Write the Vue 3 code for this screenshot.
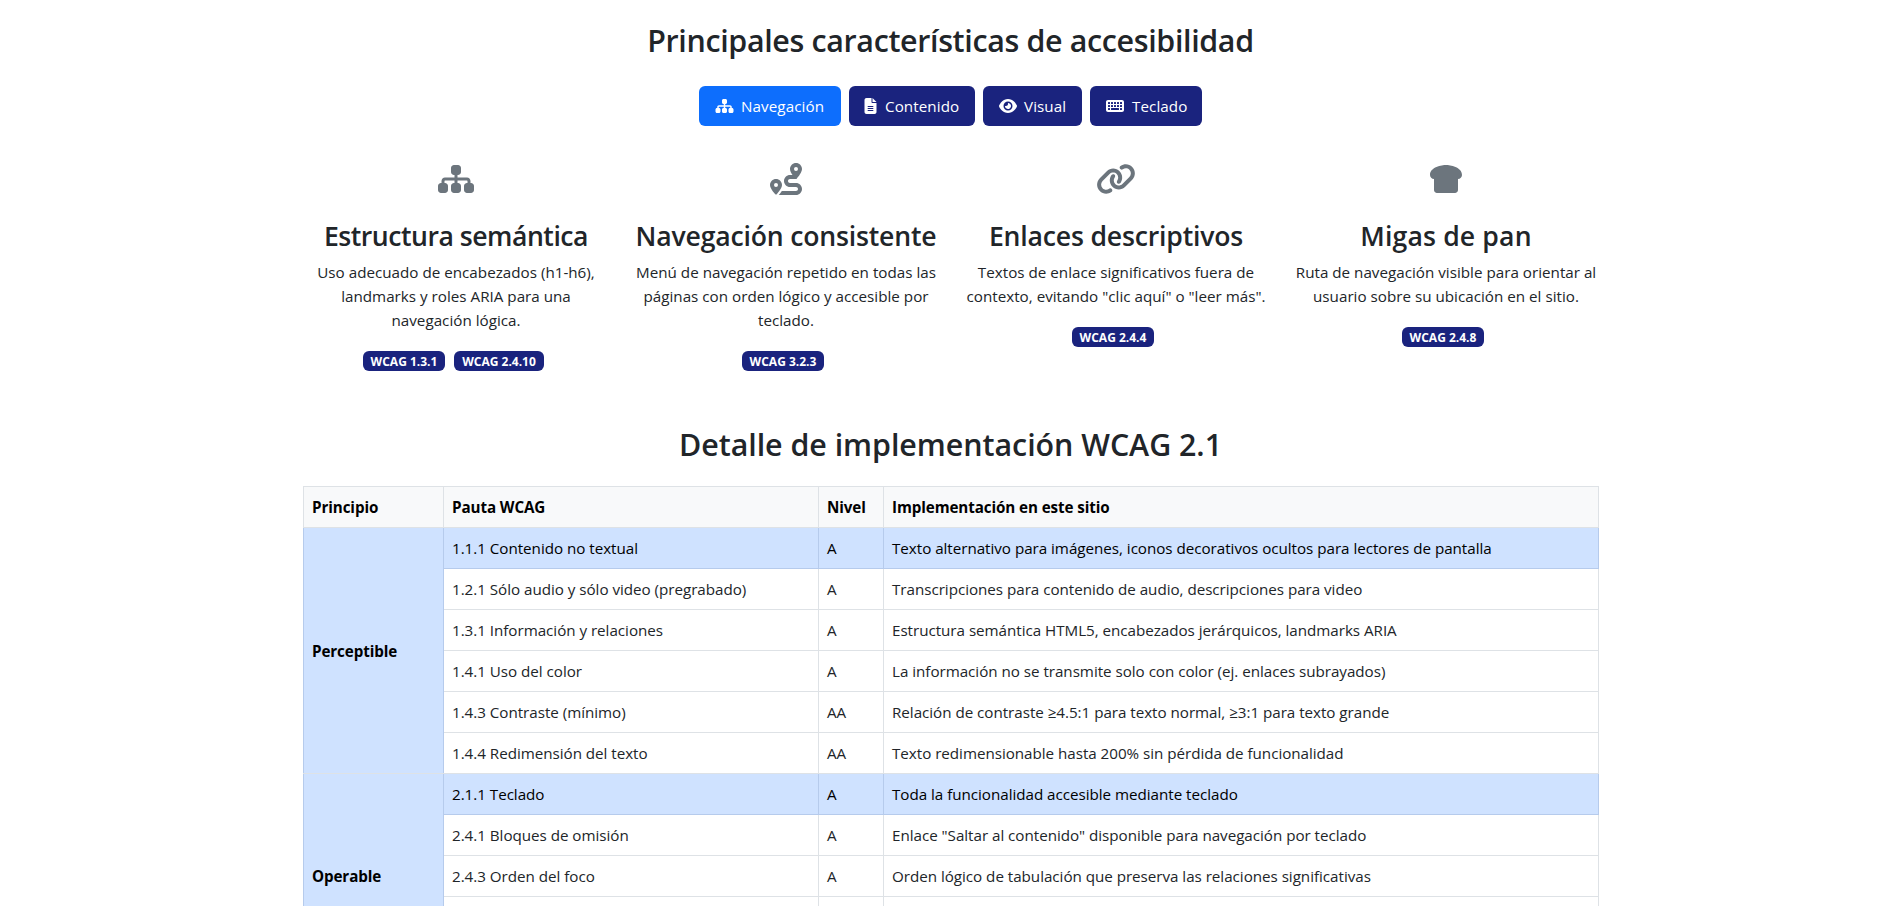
<script setup>
const icons = {
  sitemap: { w: 576, d: 'M208 80c0-26.5 21.5-48 48-48l64 0c26.5 0 48 21.5 48 48l0 64c0 26.5-21.5 48-48 48l-8 0 0 40 152 0c30.9 0 56 25.1 56 56l0 32 8 0c26.5 0 48 21.5 48 48l0 64c0 26.5-21.5 48-48 48l-64 0c-26.5 0-48-21.5-48-48l0-64c0-26.5 21.5-48 48-48l8 0 0-32c0-4.4-3.6-8-8-8l-152 0 0 40 8 0c26.5 0 48 21.5 48 48l0 64c0 26.5-21.5 48-48 48l-64 0c-26.5 0-48-21.5-48-48l0-64c0-26.5 21.5-48 48-48l8 0 0-40-152 0c-4.4 0-8 3.6-8 8l0 32 8 0c26.5 0 48 21.5 48 48l0 64c0 26.5-21.5 48-48 48l-64 0c-26.5 0-48-21.5-48-48l0-64c0-26.5 21.5-48 48-48l8 0 0-32c0-30.9 25.1-56 56-56l152 0 0-40-8 0c-26.5 0-48-21.5-48-48l0-64z' },
  file: { w: 384, d: 'M64 0C28.7 0 0 28.7 0 64V448c0 35.3 28.7 64 64 64H320c35.3 0 64-28.7 64-64V160H256c-17.7 0-32-14.3-32-32V0H64zM256 0V128H384L256 0zM112 256H272c8.800 0 16 7.200 16 16s-7.200 16-16 16H112c-8.800 0-16-7.200-16-16s7.200-16 16-16zm0 64H272c8.800 0 16 7.200 16 16s-7.200 16-16 16H112c-8.800 0-16-7.200-16-16s7.200-16 16-16zm0 64H272c8.800 0 16 7.200 16 16s-7.200 16-16 16H112c-8.800 0-16-7.200-16-16s7.200-16 16-16z' },
  eye: { w: 576, d: 'M288 32c-80.8 0-145.5 36.8-192.6 80.6C48.6 156 17.3 208 2.5 243.7c-3.3 7.9-3.3 16.7 0 24.6C17.3 304 48.6 356 95.4 399.4C142.5 443.2 207.2 480 288 480s145.500-36.8 192.600-80.600c46.800-43.500 78.100-95.400 93-131.100c3.300-7.900 3.300-16.700 0-24.600c-14.900-35.700-46.200-87.700-93-131.100C433.500 68.800 368.800 32 288 32zM144 256a144 144 0 1 1 288 0 144 144 0 1 1 -288 0zm144-64c0 35.300-28.700 64-64 64c-7.100 0-13.900-1.200-20.300-3.300c-5.500-1.800-11.900 1.600-11.700 7.400c.3 6.900 1.300 13.800 3.200 20.700c13.700 51.200 66.400 81.600 117.600 67.900s81.600-66.400 67.900-117.600c-11.100-41.500-47.800-69.400-88.600-71.100c-5.800-.2-9.200 6.100-7.400 11.700c2.100 6.400 3.300 13.200 3.300 20.300z' },
  keyboard: { w: 576, d: 'M64 64C28.700 64 0 92.700 0 128V384c0 35.300 28.700 64 64 64H512c35.300 0 64-28.700 64-64V128c0-35.300-28.700-64-64-64H64zM80 128h32q16 0 16 16v32q0 16-16 16H80q-16 0-16-16V144q0-16 16-16zM80 224h32q16 0 16 16v32q0 16-16 16H80q-16 0-16-16V240q0-16 16-16zM80 320h32q16 0 16 16v32q0 16-16 16H80q-16 0-16-16V336q0-16 16-16zM176 128h32q16 0 16 16v32q0 16-16 16H176q-16 0-16-16V144q0-16 16-16zM176 224h32q16 0 16 16v32q0 16-16 16H176q-16 0-16-16V240q0-16 16-16zM176 320h224q16 0 16 16v32q0 16-16 16H176q-16 0-16-16V336q0-16 16-16zM272 128h32q16 0 16 16v32q0 16-16 16H272q-16 0-16-16V144q0-16 16-16zM272 224h32q16 0 16 16v32q0 16-16 16H272q-16 0-16-16V240q0-16 16-16zM368 128h32q16 0 16 16v32q0 16-16 16H368q-16 0-16-16V144q0-16 16-16zM368 224h32q16 0 16 16v32q0 16-16 16H368q-16 0-16-16V240q0-16 16-16zM464 128h32q16 0 16 16v32q0 16-16 16H464q-16 0-16-16V144q0-16 16-16zM464 224h32q16 0 16 16v32q0 16-16 16H464q-16 0-16-16V240q0-16 16-16zM464 320h32q16 0 16 16v32q0 16-16 16H464q-16 0-16-16V336q0-16 16-16z' },
  route: { w: 512, d: 'M512 96c0 50.2-59.1 125.1-84.6 155c-3.8 4.4-9.4 6.1-14.5 5H320c-17.7 0-32 14.3-32 32s14.3 32 32 32h96c53 0 96 43 96 96s-43 96-96 96H139.6c8.7-9.9 19.3-22.6 30-36.8c6.3-8.4 12.8-17.6 19-27.2H416c17.7 0 32-14.3 32-32s-14.3-32-32-32H320c-53 0-96-43-96-96s43-96 96-96h39.8c-21-31.5-39.8-67.7-39.8-96c0-53 43-96 96-96s96 43 96 96zM117.1 489.1c-3.8 4.3-7.2 8.1-10.1 11.3l-1.8 2-.2-.2c-6 4.6-14.6 4-20-1.8C59.8 473 0 402.5 0 352c0-53 43-96 96-96s96 43 96 96c0 30-21.1 67-43.5 97.9c-10.7 14.7-21.7 28-30.8 38.5l-.6 .7zM128 352a32 32 0 1 0 -64 0 32 32 0 1 0 64 0zM416 128a32 32 0 1 0 0-64 32 32 0 1 0 0 64z' },
  link: { w: 640, d: 'M579.8 267.7c56.5-56.5 56.5-148 0-204.5c-50-50-128.8-56.5-186.3-15.4l-1.6 1.1c-14.4 10.3-17.7 30.3-7.4 44.6s30.3 17.7 44.6 7.4l1.6-1.1c32.1-22.9 76-19.3 103.8 8.6c31.5 31.5 31.5 82.5 0 114L422.3 334.8c-31.5 31.5-82.5 31.5-114 0c-27.9-27.9-31.5-71.8-8.6-103.8l1.1-1.6c10.3-14.4 6.9-34.4-7.4-44.6s-34.4-6.9-44.6 7.4l-1.1 1.6C206.5 251.2 213 330 263 380c56.5 56.5 148 56.5 204.5 0L579.8 267.7zM60.2 244.3c-56.5 56.5-56.5 148 0 204.5c50 50 128.8 56.5 186.3 15.4l1.6-1.1c14.4-10.3 17.7-30.3 7.4-44.6s-30.3-17.7-44.6-7.4l-1.6 1.1c-32.1 22.9-76 19.3-103.8-8.6C74 372 74 321 105.5 289.5L217.7 177.2c31.5-31.5 82.5-31.5 114 0c27.9 27.9 31.5 71.8 8.6 103.9l-1.1 1.6c-10.3 14.4-6.9 34.4 7.4 44.6s34.4 6.9 44.6-7.4l1.1-1.6C433.5 260.8 427 182 377 132c-56.5-56.5-148-56.5-204.5 0L60.2 244.3z' },
  bread: { w: 512, d: 'M256 32C192 32 0 64 0 192c0 35.3 28.7 64 64 64V432c0 26.5 21.5 48 48 48H400c26.5 0 48-21.5 48-48V256c35.3 0 64-28.7 64-64C512 64 320 32 256 32z' },
}

const tabs = [
  { id: 'navegacion', label: 'Navegación', icon: 'sitemap', active: true },
  { id: 'contenido', label: 'Contenido', icon: 'file' },
  { id: 'visual', label: 'Visual', icon: 'eye' },
  { id: 'teclado', label: 'Teclado', icon: 'keyboard' },
]

const features = [
  { icon: 'sitemap', title: 'Estructura semántica', lines: ['Uso adecuado de encabezados (h1-h6),', 'landmarks y roles ARIA para una', 'navegación lógica.'], tags: ['WCAG 1.3.1', 'WCAG 2.4.10'] },
  { icon: 'route', title: 'Navegación consistente', lines: ['Menú de navegación repetido en todas las', 'páginas con orden lógico y accesible por', 'teclado.'], tags: ['WCAG 3.2.3'] },
  { icon: 'link', title: 'Enlaces descriptivos', lines: ['Textos de enlace significativos fuera de', 'contexto, evitando "clic aquí" o "leer más".'], tags: ['WCAG 2.4.4'] },
  { icon: 'bread', title: 'Migas de pan', lines: ['Ruta de navegación visible para orientar al', 'usuario sobre su ubicación en el sitio.'], tags: ['WCAG 2.4.8'] },
]

const groups = [
  {
    name: 'Perceptible',
    rows: [
      ['1.1.1 Contenido no textual', 'A', 'Texto alternativo para imágenes, iconos decorativos ocultos para lectores de pantalla'],
      ['1.2.1 Sólo audio y sólo video (pregrabado)', 'A', 'Transcripciones para contenido de audio, descripciones para video'],
      ['1.3.1 Información y relaciones', 'A', 'Estructura semántica HTML5, encabezados jerárquicos, landmarks ARIA'],
      ['1.4.1 Uso del color', 'A', 'La información no se transmite solo con color (ej. enlaces subrayados)'],
      ['1.4.3 Contraste (mínimo)', 'AA', 'Relación de contraste ≥4.5:1 para texto normal, ≥3:1 para texto grande'],
      ['1.4.4 Redimensión del texto', 'AA', 'Texto redimensionable hasta 200% sin pérdida de funcionalidad'],
    ],
  },
  {
    name: 'Operable',
    rows: [
      ['2.1.1 Teclado', 'A', 'Toda la funcionalidad accesible mediante teclado'],
      ['2.4.1 Bloques de omisión', 'A', 'Enlace "Saltar al contenido" disponible para navegación por teclado'],
      ['2.4.3 Orden del foco', 'A', 'Orden lógico de tabulación que preserva las relaciones significativas'],
      ['', '', ''],
      ['', '', ''],
    ],
  },
]
</script>

<template>
  <main class="page">
    <h2 class="title main-title">Principales características de accesibilidad</h2>

    <nav class="tabs">
      <button v-for="t in tabs" :key="t.id" class="tab" :class="[t.id, { active: t.active }]">
        <svg class="tab-icon" :class="t.icon" :viewBox="`0 0 ${icons[t.icon].w} 512`"><path fill-rule="evenodd" :d="icons[t.icon].d" /></svg>
        <span>{{ t.label }}</span>
      </button>
    </nav>

    <section class="features">
      <article v-for="f in features" :key="f.title" class="feature">
        <svg class="feature-icon" :class="f.icon" :viewBox="`0 0 ${icons[f.icon].w} 512`"><path :d="icons[f.icon].d" /></svg>
        <h3>{{ f.title }}</h3>
        <p><span v-for="l in f.lines" :key="l">{{ l }}</span></p>
        <div class="tags"><span v-for="g in f.tags" :key="g" class="tag">{{ g }}</span></div>
      </article>
    </section>

    <h2 class="title detail">Detalle de implementación WCAG 2.1</h2>

    <table class="grid">
      <colgroup><col class="c1" /><col class="c2" /><col class="c3" /><col class="c4" /></colgroup>
      <thead>
        <tr><th>Principio</th><th>Pauta WCAG</th><th>Nivel</th><th>Implementación en este sitio</th></tr>
      </thead>
      <tbody v-for="g in groups" :key="g.name">
        <tr v-for="(r, i) in g.rows" :key="i" :class="{ primary: i === 0 }">
          <th v-if="i === 0" :rowspan="g.rows.length">{{ g.name }}</th>
          <td v-for="(c, j) in r" :key="j">{{ c }}</td>
        </tr>
      </tbody>
    </table>
  </main>
</template>

<style>
html, body { height: 906px; overflow: hidden; background: #fff; }
</style>

<style scoped>
.page {
  box-sizing: border-box;
  width: 1297px;
  height: 906px;
  margin-left: 302px;
  padding-top: 22px;
  overflow: hidden;
  font-family: "Open Sans", "Noto Sans", sans-serif;
  font-size: 15.2px;
  line-height: 24px;
  color: #212529;
}
.title {
  margin: 0;
  height: 38px;
  line-height: 38px;
  font-size: 30.4px;
  font-weight: 600;
  letter-spacing: -0.04px;
  text-align: center;
  white-space: nowrap;
}
.main-title { letter-spacing: -0.34px; }
.tabs { display: flex; justify-content: center; gap: 8px; margin-top: 26px; }
.tab {
  display: flex;
  align-items: center;
  gap: 7px;
  box-sizing: border-box;
  height: 40px;
  padding: 0 0 0 16px;
  border: 0;
  border-radius: 6px;
  background: #1a237e;
  color: #fff;
  font: inherit;
  letter-spacing: 0.08px;
  white-space: nowrap;
}
.tab.active { background: #0d6efd; }
.navegacion { width: 142px; }
.contenido { width: 126px; }
.contenido { padding-left: 15px; gap: 8px; }
.visual { width: 99px; }
.teclado { width: 112px; gap: 8px; }
.tab-icon { height: 16px; width: 18px; flex: none; fill: currentColor; }
.tab-icon.sitemap { width: 19px; }
.tab-icon.file { width: 13px; }
.features { display: grid; grid-template-columns: repeat(4, 306px); column-gap: 24px; height: 263px; margin-top: 37px; padding-left: 1px; }
.feature { display: flex; flex-direction: column; align-items: center; text-align: center; }
.feature-icon { height: 32px; width: 36px; fill: #6c757d; }
.feature-icon.route, .feature-icon.bread { width: 32px; }
.feature-icon.link { width: 40px; }
.feature h3 { margin: 24px 0 0; height: 41px; line-height: 34px; font-size: 26.6px; font-weight: 600; letter-spacing: -0.18px; white-space: nowrap; }
.feature:first-child h3 { letter-spacing: -0.48px; }
.feature:last-child h3 { letter-spacing: 0.15px; }
.feature p { margin: 0; letter-spacing: 0.01px; }
.feature p span { display: block; white-space: nowrap; }
.tags { display: flex; gap: 9px; margin: 19px 6px 0 0; }
.feature:first-child .tags { margin-right: 5px; }
.tag {
  box-sizing: border-box;
  height: 20px;
  width: 82px;
  line-height: 21px;
  border-radius: 6px;
  background: #1a237e;
  color: #fff;
  font-size: 12px;
  font-weight: 700;
  white-space: nowrap;
}
.tag:nth-child(2) { width: 90px; }
.title.detail { margin-bottom: 22px; }
.grid { width: 1296px; margin-left: 1px; table-layout: fixed; border-collapse: collapse; }
.c1 { width: 140px; }
.c2 { width: 375px; }
.c3 { width: 65px; }
.grid th, .grid td {
  box-sizing: border-box;
  height: 41px;
  padding: 0 8px;
  border: 1px solid #dee2e6;
  text-align: left;
  letter-spacing: -0.03px;
  white-space: nowrap;
}
.grid th { color: #000; font-weight: 700; letter-spacing: -0.1px; }
.grid thead th { background: #f8f9fa; }
.grid .primary th, .grid .primary td { background: #cfe2ff; border-color: #dee2e6 #b6cbec #b6cbec; color: #000; }
.grid .primary th { border-bottom-color: #dee2e6; }
</style>
